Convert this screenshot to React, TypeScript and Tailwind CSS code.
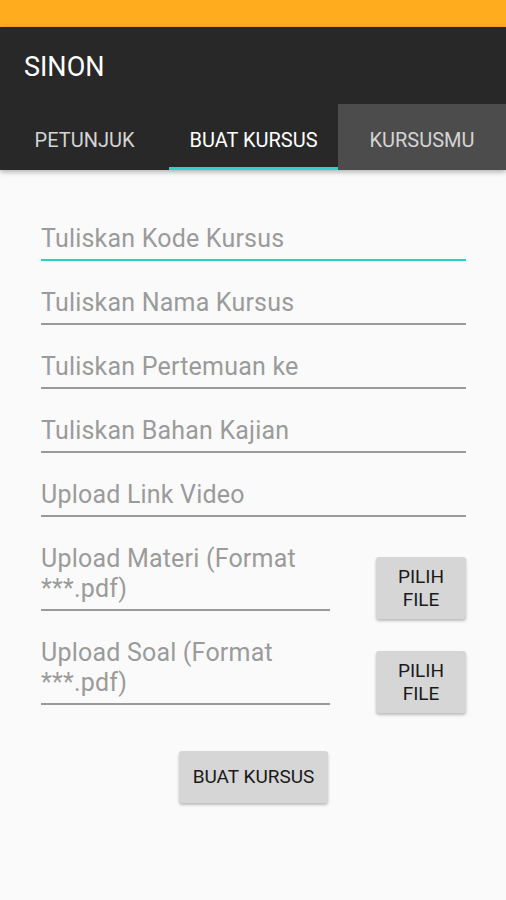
import React from "react";

const fields = [
  "Tuliskan Kode Kursus",
  "Tuliskan Nama Kursus",
  "Tuliskan Pertemuan ke",
  "Tuliskan Bahan Kajian",
  "Upload Link Video",
];

const uploads = ["Upload Materi (Format ***.pdf)", "Upload Soal (Format ***.pdf)"];

function Field({ label, active }: { label: string; active?: boolean }) {
  return (
    <div
      className={`h-[64px] flex items-end pb-[5px] border-b-2 ${
        active ? "border-[#27d1c4]" : "border-[#9a9a9a]"
      }`}
    >
      <span className="text-[25px] leading-[30px] tracking-[0.2px] text-[#9b9b9b]">{label}</span>
    </div>
  );
}

function FileButton() {
  return (
    <button className="w-[90px] h-[62px] rounded-[3px] bg-[#d6d6d6] shadow-[0_2px_3px_rgba(0,0,0,0.25)] text-[19px] leading-[23px] text-[#1a1a1a]">
      PILIH
      <br />
      FILE
    </button>
  );
}

export default function App() {
  return (
    <div
      className="w-[506px] h-[900px] bg-[#fafafa] flex flex-col"
      style={{ fontFamily: "Roboto, 'Liberation Sans', sans-serif" }}
    >
      <div className="h-[27px] bg-[#ffac1f]" />
      <div className="bg-[#282828] shadow-[0_2px_5px_rgba(0,0,0,0.3)] relative z-10">
        <div className="h-[77px] flex items-center px-[24px] pt-[4px]">
          <span className="text-white text-[27px]">SINON</span>
        </div>
        <div className="flex h-[66px]">
          <div className="w-[169px] flex items-center justify-center pt-[5px] text-[20px] text-[#d4d4d4]">
            PETUNJUK
          </div>
          <div className="w-[169px] flex items-center justify-center pt-[5px] text-[20px] text-white relative">
            BUAT KURSUS
            <div className="absolute left-0 right-0 bottom-0 h-[3px] bg-[#2fd3c5]" />
          </div>
          <div className="flex-1 bg-[#4c4c4c] flex items-center justify-center pt-[5px] text-[20px] text-[#d4d4d4]">
            KURSUSMU
          </div>
        </div>
      </div>

      <div className="px-[41px] pt-[27px] pr-[40px]">
        {fields.map((f, i) => (
          <Field key={f} label={f} active={i === 0} />
        ))}

        {uploads.map((u) => (
          <div key={u} className="flex items-end justify-between h-[94px]">
            <div className="w-[289px] border-b-2 border-[#9a9a9a] pb-[5px] text-[25px] leading-[30px] tracking-[0.2px] text-[#9b9b9b]">
              {u}
            </div>
            <div className="mb-[-8px]">
              <FileButton />
            </div>
          </div>
        ))}

        <div className="flex justify-center pt-[46px]">
          <button className="w-[149px] h-[52px] rounded-[3px] bg-[#d6d6d6] shadow-[0_2px_3px_rgba(0,0,0,0.25)] text-[19px] text-[#1a1a1a]">
            BUAT KURSUS
          </button>
        </div>
      </div>
    </div>
  );
}
